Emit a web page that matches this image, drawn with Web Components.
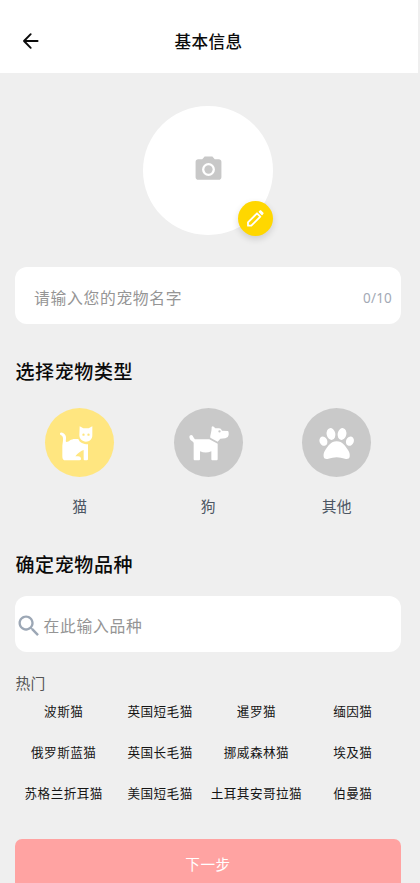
<!DOCTYPE html>
<html lang="zh-CN">
<head>
<meta charset="utf-8">
<title>基本信息</title>
<style>
html,body{margin:0;height:883px;overflow:hidden;background:#efefef}
body{font-family:"Noto Sans CJK SC",sans-serif;color:#0b0b0b}
</style>
</head>
<body>
<pet-page></pet-page>
<script>
const define = (name, html) => customElements.define(name, class extends HTMLElement {
  constructor() {
    super();
    const t = document.createElement('template');
    t.innerHTML = html;
    this.attachShadow({mode: 'open'}).append(t.content.cloneNode(true));
  }
});

define('app-bar', `<style>
:host{display:flex;align-items:center;box-sizing:border-box;height:73px;padding:9px 0 0 22px;margin-right:2px;background:#fff}
svg{display:block;width:18px;height:18px;flex:none}
.t{flex:1;padding-right:41px;text-align:center;font-size:16.6px;font-weight:500;line-height:24px;letter-spacing:.4px}
</style>
<svg viewBox="0 0 18 18" fill="none" stroke="#0b0b0b" stroke-width="1.9" stroke-linecap="round" stroke-linejoin="round"><path d="M15.600 9H2M8.700 2.200L2 9l6.700 6.800"/></svg>
<div class="t"><slot></slot></div>`);

define('pet-avatar', `<style>
:host{display:flex;align-items:center;justify-content:center;position:relative;width:129.600px;height:129.600px;border-radius:50%;background:#fff;margin:32.700px auto 0}
.cam{width:31px;height:31px;fill:#c8c8c8;margin-top:-1px}
.edit{position:absolute;right:0;bottom:-.5px;width:35px;height:35px;border-radius:50%;background:#ffd700;box-shadow:0 3px 7px rgba(0,0,0,.14)}
.edit svg{display:block;width:35px;height:35px}
</style>
<svg class="cam" viewBox="0 0 24 24"><path fill-rule="evenodd" d="M9 2L7.170 4H4c-1.100 0-2 .9-2 2v12c0 1.100.9 2 2 2h16c1.100 0 2-.9 2-2V6c0-1.100-.9-2-2-2h-3.170L15 2zM12 7a5 5 0 1 1 0 10a5 5 0 0 1 0-10z"/><circle cx="12" cy="12" r="3.200"/></svg>
<div class="edit"><svg viewBox="324 316 105 105" fill="none" stroke="#fff" stroke-width="5.500" stroke-linejoin="round"><path d="M354 390V380L381 353L391 363L364 390Z"/><path d="M388 348.500L391.500 345.500L399 352.500L396 356.500Z" fill="#fff" stroke-width="4"/></svg></div>`);

define('text-field', `<style>
:host{display:flex;align-items:center;box-sizing:border-box;height:56.300px;border-radius:12px;background:#fff;padding:5px 9px 0 19px;color:#959595;font-size:15.800px;letter-spacing:.68px;line-height:24px}
:host([search]){padding:4px 9px 0 0}
:host([search]) .v{padding-left:.5px}
.v{flex:1}
::slotted(svg){display:block;width:28px;height:28px;fill:#9ca7b5;flex:none}
::slotted(span){color:#a3a9b5;font-size:13.500px;letter-spacing:.2px;font-family:"Noto Sans",sans-serif}
</style><slot name="icon"></slot><div class="v"><slot></slot></div><slot name="count"></slot>`);

define('section-title', `<style>
:host{display:block;font-size:19px;font-weight:500;letter-spacing:.6px;line-height:28px;padding-left:.5px}
</style><slot></slot>`);

define('pet-type', `<style>
:host{display:flex;flex-direction:column;align-items:center;color:#4c5663}
.c{width:69px;height:69px;border-radius:50%;background:#c9c9c9}
:host([active]) .c{background:#ffe680}
::slotted(svg){display:block;width:69px;height:69px;fill:#fff}
.l{margin-top:17px;font-size:14.800px;line-height:24px;letter-spacing:.3px}
</style><div class="c"><slot name="icon"></slot></div><div class="l"><slot></slot></div>`);

define('breed-item', `<style>
:host{display:block;text-align:center;font-size:12.600px;line-height:41px;letter-spacing:.45px;white-space:nowrap;color:#151515}
</style><slot></slot>`);

define('next-button', `<style>
:host{display:flex;justify-content:center;align-items:center;box-sizing:border-box;height:50px;padding-bottom:2px;border-radius:7px;background:#ffa3a2;color:#fff;font-size:14.600px;letter-spacing:.5px}
</style><slot></slot>`);

define('pet-page', `<style>
:host{display:block;height:883px;overflow:hidden}
main{padding:0 19px 0 15px}
pet-avatar{margin-bottom:32.200px}
.h1{margin:33.500px 0 22.500px}
.h2{margin:32.300px 0 17.500px}
.types{display:grid;grid-template-columns:repeat(3,1fr);padding-left:.5px}
.hot{font-size:14.800px;letter-spacing:.3px;line-height:22px;color:#555;padding-left:.5px;margin-top:20px}
.breeds{display:grid;grid-template-columns:repeat(4,1fr);margin-top:-3.500px;margin-bottom:26px;padding-left:.5px}
</style>
<app-bar>基本信息</app-bar>
<main>
<pet-avatar></pet-avatar>
<text-field>请输入您的宠物名字<span slot="count">0/10</span></text-field>
<section-title class="h1">选择宠物类型</section-title>
<div class="types">
<pet-type active><svg slot="icon" viewBox="30 23 207 207"><path fill-rule="evenodd" d="M134 78L145 84H161L172 78V105C172 117 163 124 153 124C142 124 133 116 133 105ZM142 103a3.500 3.500 0 1 0 7 0a3.500 3.500 0 1 0-7 0M157 103a3.500 3.500 0 1 0 7 0a3.500 3.500 0 1 0-7 0"/><path d="M75 99Q77 95 82 97C92 101 94 108 93 116C92 123 92 125 95 125C102 124 107 116 120 116H130C134 127 145 132 159 132V177Q159 180 155 180H149Q146 180 146 177V149C139 151 128 158 121 168H129Q138 169 138 176Q138 180 133 180H92Q82 180 82 169V140C82 128 87 115 82 108Q80 105 77 104Q74 102 75 99Z"/></svg>猫</pet-type>
<pet-type><svg slot="icon" viewBox="31 23 207 207"><path fill-rule="evenodd" d="M144 80Q147 76 151 80L155 84H166Q172 84 175 91L193 92Q195 93 195 98V104Q194 112 185 114L170 115L162 124L140 112C139 105 144 96 144 80ZM164 93a3.500 3.500 0 1 0 7 0a3.500 3.500 0 1 0-7 0"/><path d="M78 106Q83 102 87 106C91 112 91 117 98 117H137L162 130V177Q162 180 159 180H146Q143 180 143 177V153Q126 160 109 153V177Q109 180 106 180H93Q90 180 90 177V129C90 123 80 122 78 114Q76 109 78 106Z"/></svg>狗</pet-type>
<pet-type><svg slot="icon" viewBox="33 23 207 207"><ellipse cx="97" cy="122.500" rx="11.500" ry="14.500" transform="rotate(-24 97 122)"/><ellipse cx="120" cy="101" rx="13" ry="18" transform="rotate(-12 120 101)"/><ellipse cx="153" cy="101" rx="13" ry="18" transform="rotate(12 153 101)"/><ellipse cx="177" cy="122.500" rx="11.500" ry="14.500" transform="rotate(24 177 122)"/><path d="M137 123C155 123 163 138 171 149C176 156 177 163 176 169C175 175 169 177 162 175C145 169 129 169 112 175C105 177 99 175 98 169C97 163 98 156 103 149C111 138 119 123 137 123Z"/></svg>其他</pet-type>
</div>
<section-title class="h2">确定宠物品种</section-title>
<text-field search><svg slot="icon" viewBox="0 0 24 24"><path d="M15.500 14h-.79l-.28-.27C15.410 12.590 16 11.110 16 9.500 16 5.910 13.090 3 9.500 3S3 5.910 3 9.500 5.910 16 9.500 16c1.610 0 3.090-.59 4.230-1.570l.27.28v.79l5 4.990L20.490 19l-4.990-5zm-6 0C7.010 14 5 11.990 5 9.500S7.010 5 9.500 5 14 7.010 14 9.500 11.990 14 9.500 14z"/></svg>在此输入品种</text-field>
<div class="hot">热门</div>
<div class="breeds">
<breed-item>波斯猫</breed-item><breed-item>英国短毛猫</breed-item><breed-item>暹罗猫</breed-item><breed-item>缅因猫</breed-item>
<breed-item>俄罗斯蓝猫</breed-item><breed-item>英国长毛猫</breed-item><breed-item>挪威森林猫</breed-item><breed-item>埃及猫</breed-item>
<breed-item>苏格兰折耳猫</breed-item><breed-item>美国短毛猫</breed-item><breed-item>土耳其安哥拉猫</breed-item><breed-item>伯曼猫</breed-item>
</div>
<next-button>下一步</next-button>
</main>`);
</script>
</body>
</html>
